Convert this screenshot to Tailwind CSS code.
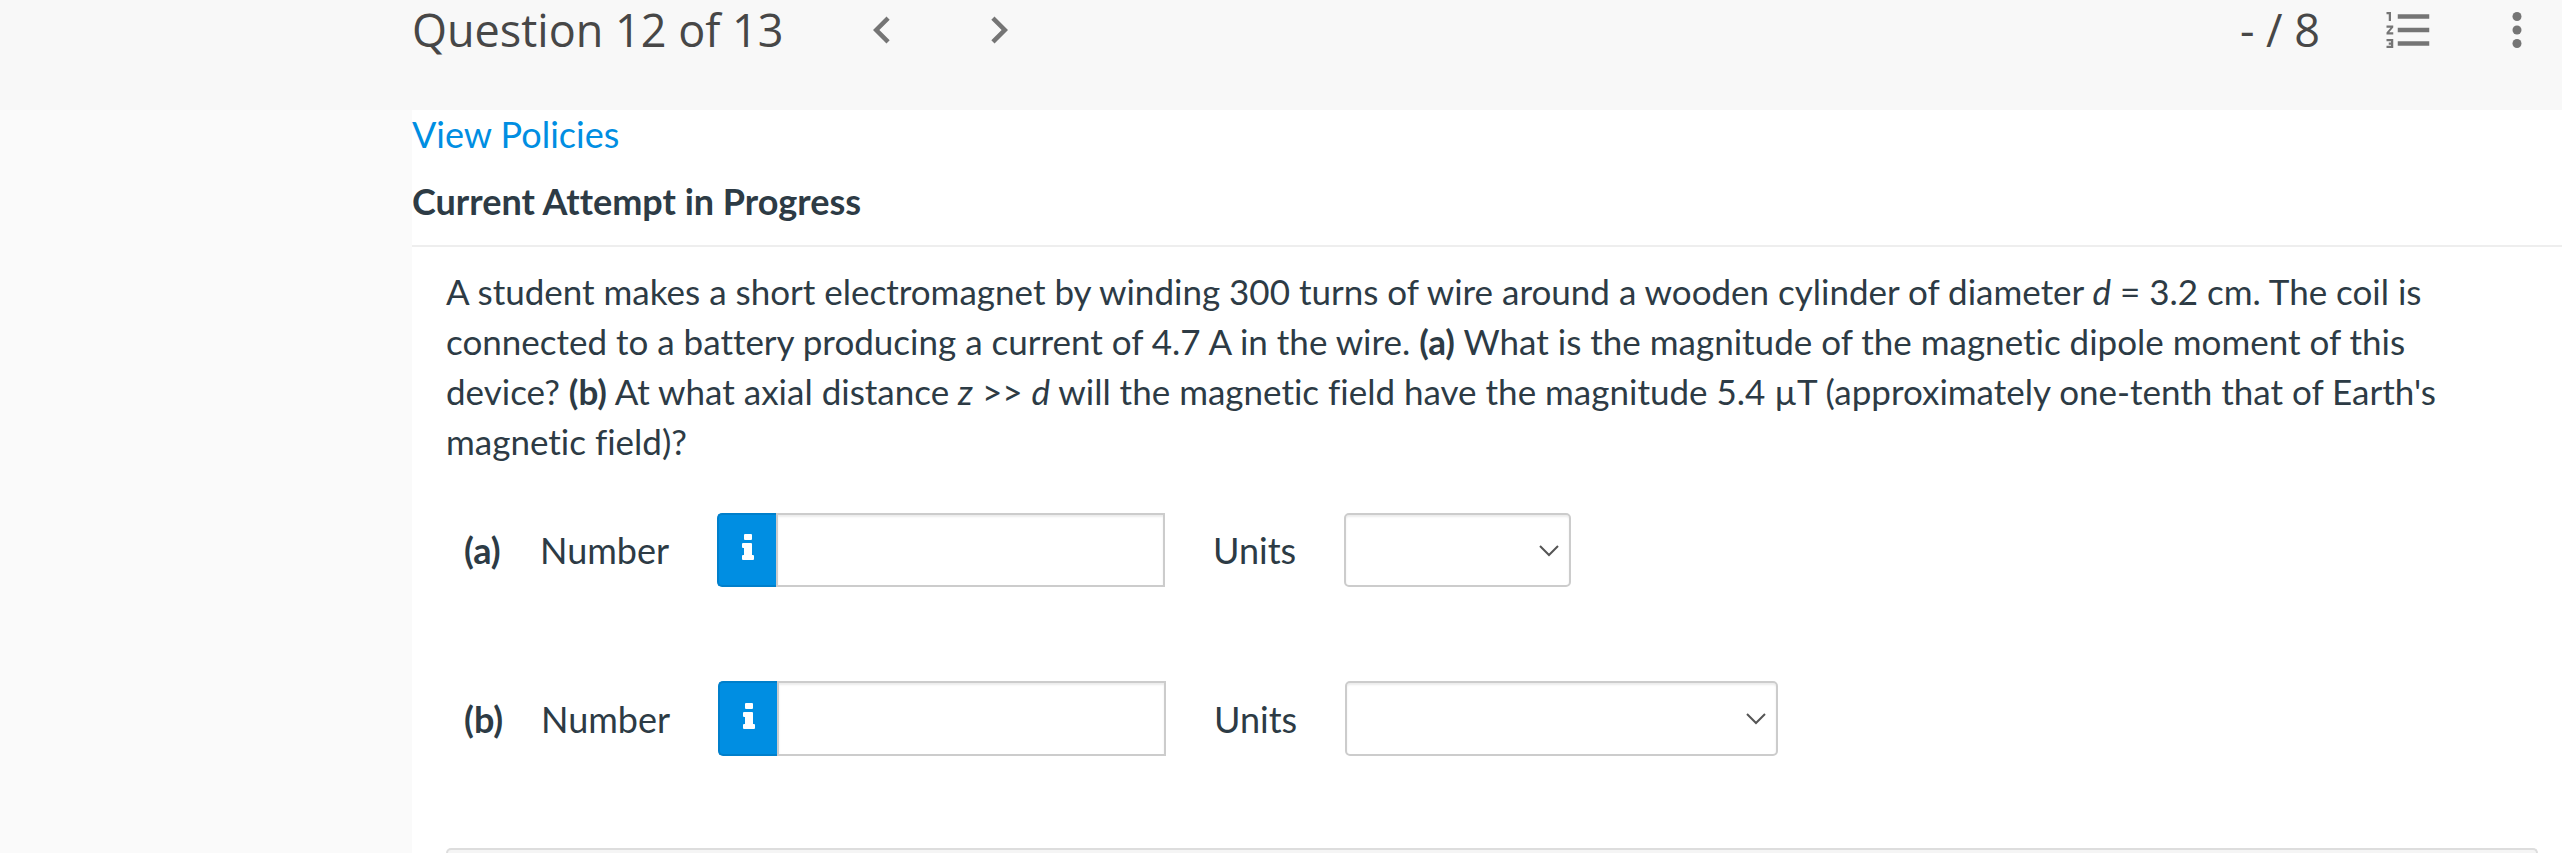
<!DOCTYPE html>
<html lang="en">
<head>
    <meta charset="UTF-8">
    <meta name="viewport" content="width=device-width, initial-scale=1.0">
    <title>Question 12 of 13</title>
    <script src="https://cdn.jsdelivr.net/npm/@tailwindcss/browser@4"></script>
</head>
<body class="bg-white font-['Lato',sans-serif] text-[36px] leading-[48px] text-[#2d3b45] [font-variant-ligatures:none] min-h-screen flex flex-col overflow-hidden">
    <header class="bg-[#f8f8f8] pl-[412px] pr-[18px] pb-[50px] flex items-center justify-between font-['Open_Sans',sans-serif] text-[45px] leading-[60px] text-[#474747]">
        <div class="flex items-center">
            <h1>Question 12 of 13</h1>
            <nav class="ml-[71px] flex gap-[63px] text-[#757575]">
                <button type="button" aria-label="Previous question">
                    <svg class="size-[54px]" viewBox="0 0 24 24" fill="currentColor"><path d="M15.41 7.41 14 6l-6 6 6 6 1.41-1.41L10.83 12z"/></svg>
                </button>
                <button type="button" aria-label="Next question">
                    <svg class="size-[54px]" viewBox="0 0 24 24" fill="currentColor"><path d="M10 6 8.59 7.41 13.17 12l-4.58 4.59L10 18l6-6z"/></svg>
                </button>
            </nav>
        </div>
        <div class="flex items-center">
            <span>- / 8</span>
            <div class="ml-[62px] flex gap-[54px] text-[#757575]">
                <button type="button" aria-label="Question list">
                    <svg class="size-[54px]" viewBox="0 0 24 24" fill="currentColor"><path d="M2 17h2v.5H3v1h1v.5H2v1h3v-4H2v1zm1-9h1V4H2v1h1v3zm-1 3h1.8L2 13.1v.9h3v-1H3.2L5 10.9V10H2v1zm5-6v2h14V5H7zm0 14h14v-2H7v2zm0-6h14v-2H7v2z"/></svg>
                </button>
                <button type="button" aria-label="More options">
                    <svg class="size-[54px]" viewBox="0 0 24 24" fill="currentColor"><circle cx="12" cy="6" r="2"/><circle cx="12" cy="12" r="2"/><circle cx="12" cy="18" r="2"/></svg>
                </button>
            </div>
        </div>
    </header>

    <div class="flex flex-1">
        <aside class="w-[412px] shrink-0 bg-[#fafafa]"></aside>
        <main class="min-w-0 flex-1">
            <div class="border-b-2 border-[#eeeeee] pb-5">
                <a href="#" class="block w-fit text-[#008ee2]">View Policies</a>
                <h2 class="mt-[19px] font-bold">Current Attempt in Progress</h2>
            </div>

            <form class="pl-[34px] pr-6">
                <p class="pt-[19px] pr-12 text-[35px] leading-[50px]">A student makes a short electromagnet by winding 300 turns of wire around a wooden cylinder of diameter <i>d</i> = 3.2 cm. The coil is connected to a battery producing a current of 4.7 A in the wire. <b>(a)</b> What is the magnitude of the magnetic dipole moment of this device? <b>(b)</b> At what axial distance <i>z</i> &gt;&gt; <i>d</i> will the magnetic field have the magnitude 5.4 µT (approximately one-tenth that of Earth's magnetic field)?</p>

                <div class="mt-[47px] pl-[18px] flex items-center">
                    <b class="w-[76px]">(a)</b>
                    <label for="numberA" class="w-[177px]">Number</label>
                    <button type="button" aria-label="Information" class="flex h-[74px] w-[59px] items-center justify-center rounded-l-[5px] border-2 border-r-0 border-[#007fcb] bg-[#008ee2] text-white">
                        <svg class="h-[26px] w-3 -mt-1.5" viewBox="0 0 12 26" fill="currentColor"><rect x="2" y="0" width="8" height="6" rx="1"/><path d="M1 9h8a1 1 0 0 1 1 1v11h1a1 1 0 0 1 1 1v3a1 1 0 0 1-1 1H1a1 1 0 0 1-1-1v-3a1 1 0 0 1 1-1h1v-7H1a1 1 0 0 1-1-1v-3a1 1 0 0 1 1-1z"/></svg>
                    </button>
                    <input type="text" id="numberA" class="h-[74px] w-[389px] border-2 border-[#cccccc] px-3 shadow-[inset_0_2px_2px_rgba(0,0,0,0.075)]">
                    <label for="unitsA" class="ml-12 w-[131px]">Units</label>
                    <div class="relative">
                        <select id="unitsA" class="block h-[74px] w-[227px] appearance-none rounded-[5px] border-2 border-[#cccccc] px-3 shadow-[inset_0_2px_2px_rgba(0,0,0,0.075)]">
                            <option></option>
                        </select>
                        <svg class="pointer-events-none absolute right-3 top-8 h-3 w-5" viewBox="0 0 20 12" fill="none" stroke="#555555" stroke-width="2"><path d="m1 1 9 9 9-9"/></svg>
                    </div>
                </div>

                <div class="mt-[94px] pl-[18px] flex items-center">
                    <b class="w-[77px]">(b)</b>
                    <label for="numberB" class="w-[177px]">Number</label>
                    <button type="button" aria-label="Information" class="flex h-[75px] w-[59px] items-center justify-center rounded-l-[5px] border-2 border-r-0 border-[#007fcb] bg-[#008ee2] text-white">
                        <svg class="h-[26px] w-3 -mt-1.5" viewBox="0 0 12 26" fill="currentColor"><rect x="2" y="0" width="8" height="6" rx="1"/><path d="M1 9h8a1 1 0 0 1 1 1v11h1a1 1 0 0 1 1 1v3a1 1 0 0 1-1 1H1a1 1 0 0 1-1-1v-3a1 1 0 0 1 1-1h1v-7H1a1 1 0 0 1-1-1v-3a1 1 0 0 1 1-1z"/></svg>
                    </button>
                    <input type="text" id="numberB" class="h-[75px] w-[389px] border-2 border-[#cccccc] px-3 shadow-[inset_0_2px_2px_rgba(0,0,0,0.075)]">
                    <label for="unitsB" class="ml-12 w-[131px]">Units</label>
                    <div class="relative">
                        <select id="unitsB" class="block h-[75px] w-[433px] appearance-none rounded-[5px] border-2 border-[#cccccc] px-3 shadow-[inset_0_2px_2px_rgba(0,0,0,0.075)]">
                            <option></option>
                        </select>
                        <svg class="pointer-events-none absolute right-3 top-8 h-3 w-5" viewBox="0 0 20 12" fill="none" stroke="#555555" stroke-width="2"><path d="m1 1 9 9 9-9"/></svg>
                    </div>
                </div>

                <!-- top edge of the toolbar under the answers -->
                <div class="mt-[92px] h-[5px] rounded-t-lg border-2 border-b-0 border-[#dddddd] bg-[#f5f5f5]"></div>
            </form>
        </main>
    </div>
</body>
</html>
